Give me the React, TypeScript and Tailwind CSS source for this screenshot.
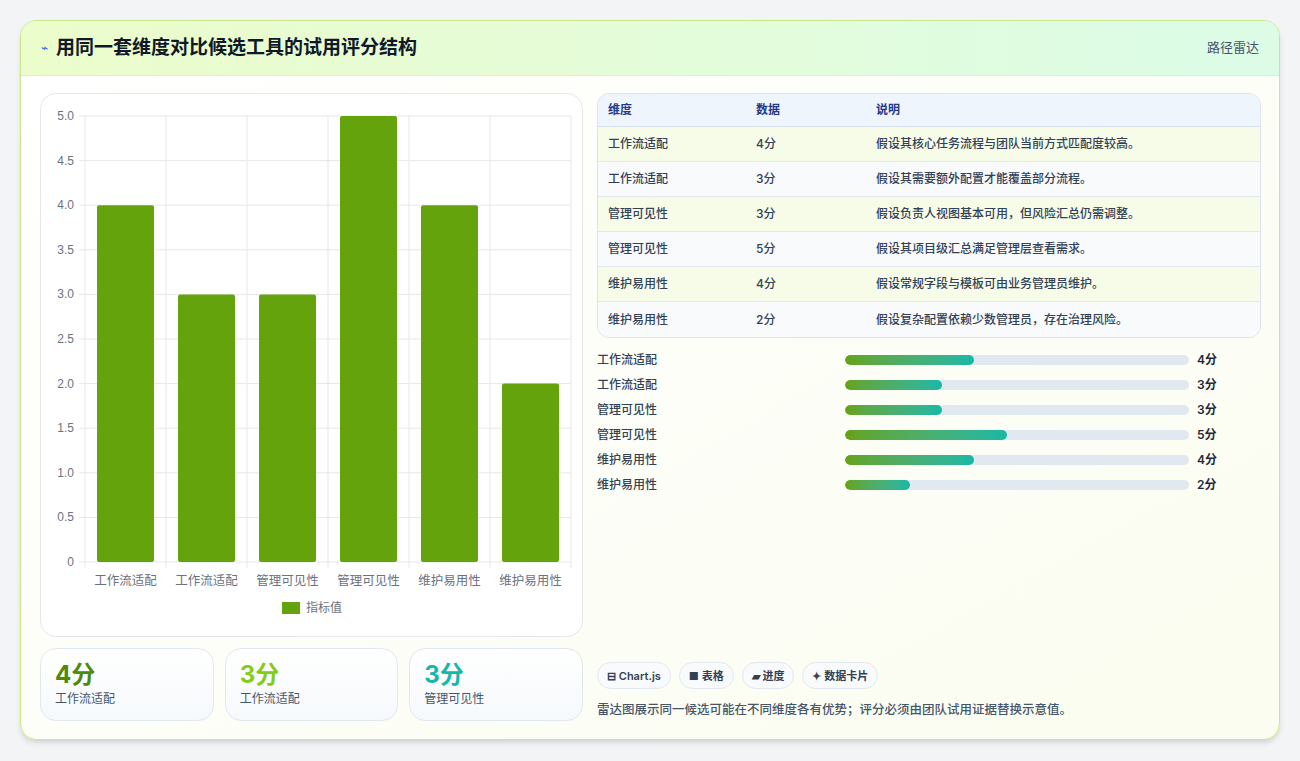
import React from 'react'

const rows = [
  { k: '工作流适配', v: 4, d: '假设其核心任务流程与团队当前方式匹配度较高。' },
  { k: '工作流适配', v: 3, d: '假设其需要额外配置才能覆盖部分流程。' },
  { k: '管理可见性', v: 3, d: '假设负责人视图基本可用，但风险汇总仍需调整。' },
  { k: '管理可见性', v: 5, d: '假设其项目级汇总满足管理层查看需求。' },
  { k: '维护易用性', v: 4, d: '假设常规字段与模板可由业务管理员维护。' },
  { k: '维护易用性', v: 2, d: '假设复杂配置依赖少数管理员，存在治理风险。' },
]

function Chart() {
  const x0 = 44, x1 = 530, y0 = 22, y1 = 468
  const h = y1 - y0
  const step = (x1 - x0) / 6
  const ticks = [0, 0.5, 1, 1.5, 2, 2.5, 3, 3.5, 4, 4.5, 5]
  return (
    <svg width="543" height="543" className="block">
      {ticks.map((t) => {
        const y = y1 - (t / 5) * h
        return (
          <g key={t}>
            <line x1={x0 - 6} x2={x1} y1={y} y2={y} stroke="#e5e7eb" />
            <text x={x0 - 11} y={y + 4} textAnchor="end" fontSize="12" fill="#6b7280" fontFamily="Liberation Sans, sans-serif">
              {t === 0 ? '0' : t.toFixed(1)}
            </text>
          </g>
        )
      })}
      {Array.from({ length: 7 }).map((_, i) => (
        <line key={i} x1={x0 + i * step} x2={x0 + i * step} y1={y0} y2={y1 + 6} stroke="#e5e7eb" />
      ))}
      {rows.map((r, i) => {
        const bh = (r.v / 5) * h
        return (
          <g key={i}>
            <rect x={x0 + i * step + 12} y={y1 - bh} width={step - 24} height={bh} rx="2" fill="#65a30d" />
            <text x={x0 + i * step + step / 2} y={y1 + 23} textAnchor="middle" fontSize="12.5" fill="#6b7280" fontFamily="Noto Sans CJK SC, sans-serif">
              {r.k}
            </text>
          </g>
        )
      })}
      <rect x="241" y="508" width="18" height="12" fill="#65a30d" />
      <text x="265" y="518" fontSize="12" fill="#6b7280" fontFamily="Noto Sans CJK SC, sans-serif">指标值</text>
    </svg>
  )
}

export default function App() {
  return (
    <div className="min-h-[761px] bg-[#f3f4f6] p-5" style={{ fontFamily: 'Inter, "Noto Sans CJK SC", sans-serif' }}>
      <div className="rounded-2xl border border-[#c8e88a] bg-gradient-to-br from-white to-[#fbfdf0] shadow-md overflow-hidden h-[720px] flex flex-col">
        <div className="h-[55px] shrink-0 flex items-center justify-between px-5 bg-gradient-to-r from-[#ecfccb] to-[#dcfce7] border-b border-[#e2ebd6]">
          <div className="flex items-center gap-2">
            <span className="text-[#2563eb] text-xs">⌁</span>
            <h1 className="text-[19px] font-bold text-[#111827]">用同一套维度对比候选工具的试用评分结构</h1>
          </div>
          <span className="text-[13px] text-[#475569]">路径雷达</span>
        </div>
        <div className="flex-1 flex gap-[14px] px-[19px] pt-[17px]">
          <div className="w-[543px] flex flex-col gap-[11px]">
            <div className="h-[544px] rounded-2xl border border-[#e5e7eb] bg-white">
              <Chart />
            </div>
            <div className="grid grid-cols-3 gap-[11px]">
              {[
                { v: '4分', l: '工作流适配', c: 'text-[#4d8a0a]' },
                { v: '3分', l: '工作流适配', c: 'text-[#84cc16]' },
                { v: '3分', l: '管理可见性', c: 'text-[#14b8a6]' },
              ].map((s, i) => (
                <div key={i} className="h-[73px] rounded-2xl border border-[#e2e8f0] bg-gradient-to-b from-white to-[#f6f9fc] px-[14px] pt-[10px]">
                  <div className={`text-[24px] font-bold leading-8 ${s.c}`}>{s.v}</div>
                  <div className="text-xs text-[#475569]">{s.l}</div>
                </div>
              ))}
            </div>
          </div>
          <div className="flex-1 flex flex-col">
            <div className="rounded-xl border border-[#dbe3ee] overflow-hidden text-xs text-[#334155] w-[664px]">
              <div className="flex h-[33px] items-center bg-[#eef5fd] border-b border-[#d7e0ec] text-[#1e3a8a] font-semibold">
                <div className="w-[158px] pl-[10px]">维度</div>
                <div className="w-[120px]">数据</div>
                <div>说明</div>
              </div>
              {rows.map((r, i) => (
                <div key={i} className={`flex h-[35px] items-center font-medium ${i % 2 === 0 ? 'bg-[#f7fce9]' : 'bg-[#f8fafc]'} ${i < 5 ? 'border-b border-[#e2e8f0]' : ''}`}>
                  <div className="w-[158px] pl-[10px]">{r.k}</div>
                  <div className="w-[120px]">{r.v}分</div>
                  <div>{r.d}</div>
                </div>
              ))}
            </div>
            <div className="mt-[9px] flex flex-col">
              {rows.map((r, i) => (
                <div key={i} className="flex h-[25px] items-center text-xs text-[#334155] font-medium">
                  <div className="w-[248px]">{r.k}</div>
                  <div className="w-[344px] h-[10px] rounded-full bg-[#e2e8f0] overflow-hidden">
                    <div className="h-full rounded-full bg-gradient-to-r from-[#65a30d] to-[#14b8a6]" style={{ width: `${r.v * 9.4}%` }} />
                  </div>
                  <div className="ml-2 font-semibold text-[#1f2937]">{r.v}分</div>
                </div>
              ))}
            </div>
            <div className="mt-auto mb-[19px]">
              <div className="flex gap-[8px] mb-[12px]">
                {['⊟ Chart.js', '■ 表格', '▰ 进度', '✦ 数据卡片'].map((t) => (
                  <span key={t} className="h-[27px] px-[9px] flex items-center rounded-full border border-[#e2e8f0] bg-[#f8fafc] text-[11px] font-semibold text-[#334155]">{t}</span>
                ))}
              </div>
              <p className="text-[12.5px] text-[#475569] font-medium">雷达图展示同一候选可能在不同维度各有优势；评分必须由团队试用证据替换示意值。</p>
            </div>
          </div>
        </div>
      </div>
    </div>
  )
}
